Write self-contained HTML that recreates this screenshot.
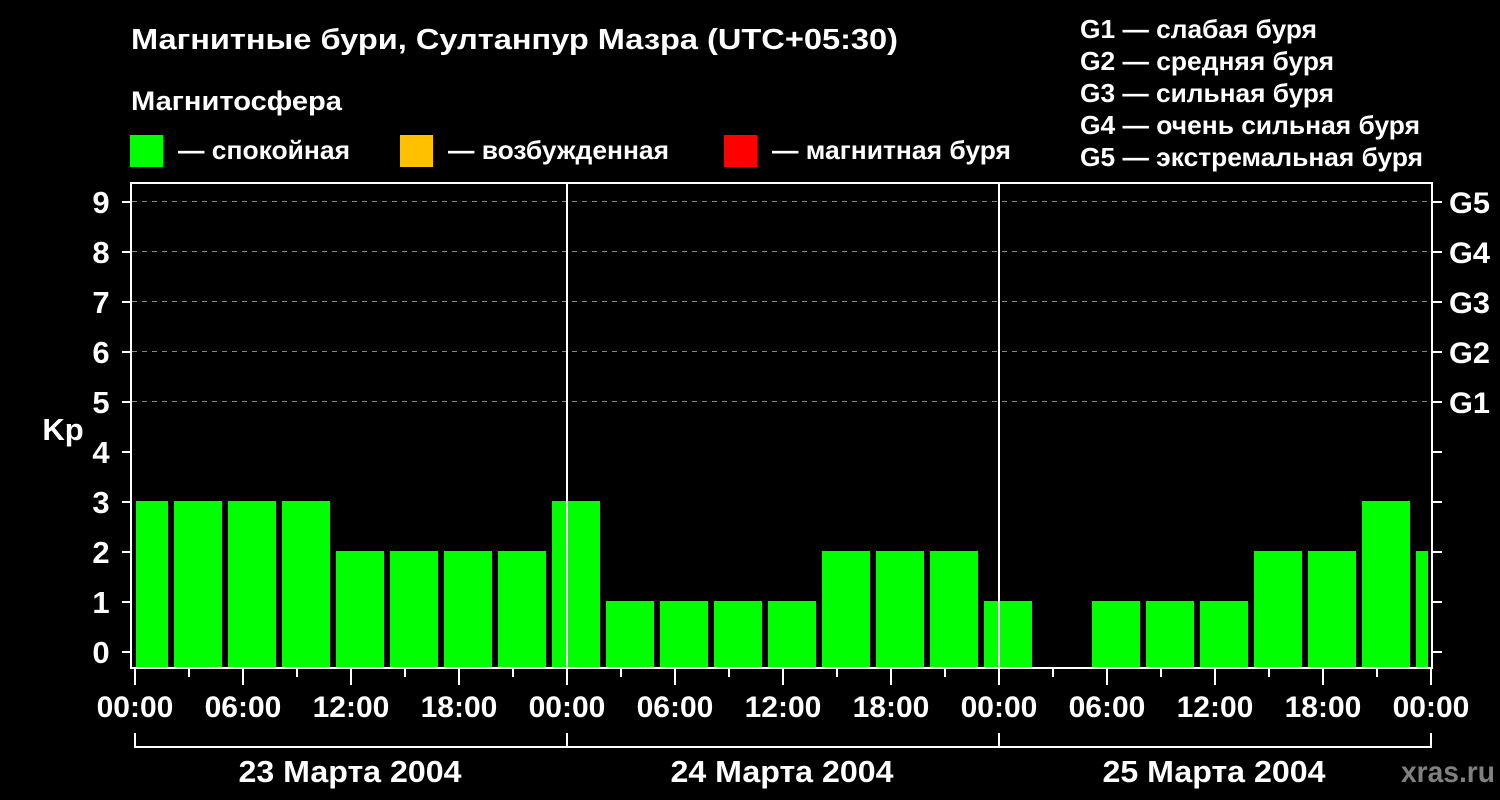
<!DOCTYPE html>
<html><head><meta charset="utf-8"><style>
html,body{margin:0;padding:0;background:#000;width:1500px;height:800px;overflow:hidden}
svg{display:block}
text{font-family:"Liberation Sans",Arial,sans-serif;font-weight:bold;fill:#fff}
</style></head><body>
<svg width="1500" height="800" viewBox="0 0 1500 800" xmlns="http://www.w3.org/2000/svg">
<rect width="1500" height="800" fill="#000"/>
<text x="131" y="49" font-size="29" textLength="767" lengthAdjust="spacingAndGlyphs">Магнитные бури, Султанпур Мазра (UTC+05:30)</text>
<text x="131" y="110" font-size="27" textLength="211" lengthAdjust="spacingAndGlyphs">Магнитосфера</text>
<rect x="130" y="135" width="33" height="32" fill="#00ff00"/>
<text x="178" y="159" font-size="26" textLength="172" lengthAdjust="spacingAndGlyphs">— спокойная</text>
<rect x="400" y="135" width="33" height="32" fill="#ffc000"/>
<text x="448" y="159" font-size="26" textLength="221" lengthAdjust="spacingAndGlyphs">— возбужденная</text>
<rect x="724" y="135" width="33" height="32" fill="#ff0000"/>
<text x="772" y="159" font-size="26" textLength="239" lengthAdjust="spacingAndGlyphs">— магнитная буря</text>
<g font-size="26">
<text x="1080" y="38" textLength="237" lengthAdjust="spacingAndGlyphs">G1 — слабая буря</text>
<text x="1080" y="70" textLength="254" lengthAdjust="spacingAndGlyphs">G2 — средняя буря</text>
<text x="1080" y="102" textLength="254" lengthAdjust="spacingAndGlyphs">G3 — сильная буря</text>
<text x="1080" y="134" textLength="340" lengthAdjust="spacingAndGlyphs">G4 — очень сильная буря</text>
<text x="1080" y="166" textLength="343" lengthAdjust="spacingAndGlyphs">G5 — экстремальная буря</text>
</g>
<g stroke="#888" stroke-width="1" stroke-dasharray="5,5">
<line x1="132" y1="201.5" x2="1431" y2="201.5"/>
<line x1="132" y1="251.5" x2="1431" y2="251.5"/>
<line x1="132" y1="301.5" x2="1431" y2="301.5"/>
<line x1="132" y1="351.5" x2="1431" y2="351.5"/>
<line x1="132" y1="401.5" x2="1431" y2="401.5"/>
</g>
<g fill="#00ff00">
<rect x="136" y="501" width="32" height="167"/>
<rect x="174" y="501" width="48" height="167"/>
<rect x="228" y="501" width="48" height="167"/>
<rect x="282" y="501" width="48" height="167"/>
<rect x="336" y="551" width="48" height="117"/>
<rect x="390" y="551" width="48" height="117"/>
<rect x="444" y="551" width="48" height="117"/>
<rect x="498" y="551" width="48" height="117"/>
<rect x="552" y="501" width="48" height="167"/>
<rect x="606" y="601" width="48" height="67"/>
<rect x="660" y="601" width="48" height="67"/>
<rect x="714" y="601" width="48" height="67"/>
<rect x="768" y="601" width="48" height="67"/>
<rect x="822" y="551" width="48" height="117"/>
<rect x="876" y="551" width="48" height="117"/>
<rect x="930" y="551" width="48" height="117"/>
<rect x="984" y="601" width="48" height="67"/>
<rect x="1092" y="601" width="48" height="67"/>
<rect x="1146" y="601" width="48" height="67"/>
<rect x="1200" y="601" width="48" height="67"/>
<rect x="1254" y="551" width="48" height="117"/>
<rect x="1308" y="551" width="48" height="117"/>
<rect x="1362" y="501" width="48" height="167"/>
<rect x="1416" y="551" width="12" height="117"/>
</g>
<g stroke="#fff" stroke-width="2" fill="none">
<rect x="131" y="183" width="1301" height="485"/>
<line x1="567" y1="183" x2="567" y2="668"/>
<line x1="999" y1="183" x2="999" y2="668"/>
</g>
<g stroke="#fff" stroke-width="2">
<line x1="122" y1="652" x2="131" y2="652"/><line x1="122" y1="602" x2="131" y2="602"/>
<line x1="122" y1="552" x2="131" y2="552"/><line x1="122" y1="502" x2="131" y2="502"/>
<line x1="122" y1="452" x2="131" y2="452"/><line x1="122" y1="402" x2="131" y2="402"/>
<line x1="122" y1="352" x2="131" y2="352"/><line x1="122" y1="302" x2="131" y2="302"/>
<line x1="122" y1="252" x2="131" y2="252"/><line x1="122" y1="202" x2="131" y2="202"/>
<line x1="1432" y1="652" x2="1442" y2="652"/><line x1="1432" y1="602" x2="1442" y2="602"/>
<line x1="1432" y1="552" x2="1442" y2="552"/><line x1="1432" y1="502" x2="1442" y2="502"/>
<line x1="1432" y1="452" x2="1442" y2="452"/><line x1="1432" y1="402" x2="1442" y2="402"/>
<line x1="1432" y1="352" x2="1442" y2="352"/><line x1="1432" y1="302" x2="1442" y2="302"/>
<line x1="1432" y1="252" x2="1442" y2="252"/><line x1="1432" y1="202" x2="1442" y2="202"/>
</g>
<g font-size="31" text-anchor="middle">
<text x="101" y="663">0</text><text x="101" y="613">1</text><text x="101" y="563">2</text>
<text x="101" y="513">3</text><text x="101" y="463">4</text><text x="101" y="413">5</text>
<text x="101" y="363">6</text><text x="101" y="313">7</text><text x="101" y="263">8</text>
<text x="101" y="213">9</text>
<text x="63" y="440">Kp</text>
</g>
<g font-size="30">
<text x="1449" y="413" textLength="41" lengthAdjust="spacingAndGlyphs">G1</text><text x="1449" y="363" textLength="41" lengthAdjust="spacingAndGlyphs">G2</text><text x="1449" y="313" textLength="41" lengthAdjust="spacingAndGlyphs">G3</text>
<text x="1449" y="263" textLength="41" lengthAdjust="spacingAndGlyphs">G4</text><text x="1449" y="213" textLength="41" lengthAdjust="spacingAndGlyphs">G5</text>
</g>
<g stroke="#fff" stroke-width="2">
<line x1="135" y1="668" x2="135" y2="685"/><line x1="189" y1="668" x2="189" y2="677"/>
<line x1="243" y1="668" x2="243" y2="685"/><line x1="297" y1="668" x2="297" y2="677"/>
<line x1="351" y1="668" x2="351" y2="685"/><line x1="405" y1="668" x2="405" y2="677"/>
<line x1="459" y1="668" x2="459" y2="685"/><line x1="513" y1="668" x2="513" y2="677"/>
<line x1="567" y1="668" x2="567" y2="685"/><line x1="621" y1="668" x2="621" y2="677"/>
<line x1="675" y1="668" x2="675" y2="685"/><line x1="729" y1="668" x2="729" y2="677"/>
<line x1="783" y1="668" x2="783" y2="685"/><line x1="837" y1="668" x2="837" y2="677"/>
<line x1="891" y1="668" x2="891" y2="685"/><line x1="945" y1="668" x2="945" y2="677"/>
<line x1="999" y1="668" x2="999" y2="685"/><line x1="1053" y1="668" x2="1053" y2="677"/>
<line x1="1107" y1="668" x2="1107" y2="685"/><line x1="1161" y1="668" x2="1161" y2="677"/>
<line x1="1215" y1="668" x2="1215" y2="685"/><line x1="1269" y1="668" x2="1269" y2="677"/>
<line x1="1323" y1="668" x2="1323" y2="685"/><line x1="1377" y1="668" x2="1377" y2="677"/>
<line x1="1431" y1="668" x2="1431" y2="685"/>
</g>
<g font-size="30" text-anchor="middle">
<text x="135" y="717">00:00</text><text x="243" y="717">06:00</text><text x="351" y="717">12:00</text><text x="459" y="717">18:00</text>
<text x="567" y="717">00:00</text><text x="675" y="717">06:00</text><text x="783" y="717">12:00</text><text x="891" y="717">18:00</text>
<text x="999" y="717">00:00</text><text x="1107" y="717">06:00</text><text x="1215" y="717">12:00</text><text x="1323" y="717">18:00</text>
<text x="1431" y="717">00:00</text>
</g>
<g stroke="#fff" stroke-width="2" fill="none">
<polyline points="135,733 135,747 1431,747 1431,733"/>
<line x1="567" y1="733" x2="567" y2="747"/>
<line x1="999" y1="733" x2="999" y2="747"/>
</g>
<g font-size="31" text-anchor="middle">
<text x="350" y="782" textLength="223" lengthAdjust="spacingAndGlyphs">23 Марта 2004</text>
<text x="782" y="782" textLength="223" lengthAdjust="spacingAndGlyphs">24 Марта 2004</text>
<text x="1214" y="782" textLength="223" lengthAdjust="spacingAndGlyphs">25 Марта 2004</text>
</g>
<text x="1401" y="782" font-size="30" style="fill:#808080" textLength="94" lengthAdjust="spacingAndGlyphs">xras.ru</text>
</svg>
</body></html>
